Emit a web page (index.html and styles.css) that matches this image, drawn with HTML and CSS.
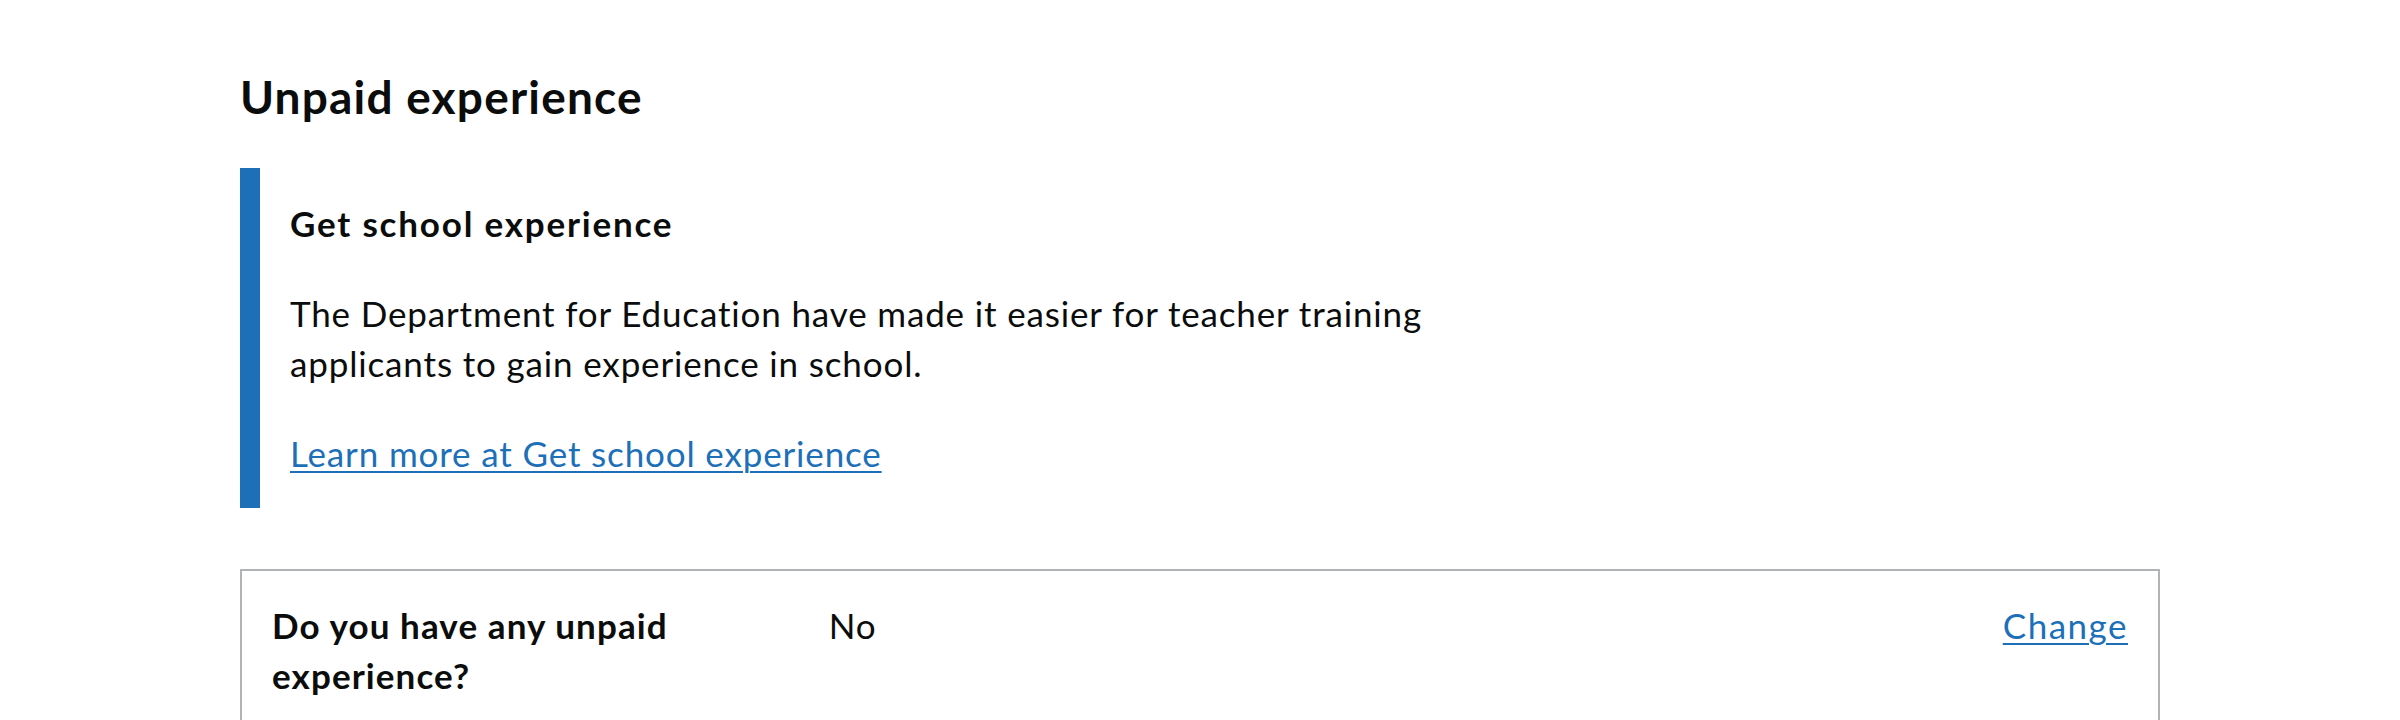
FILE: index.html
```html
<!DOCTYPE html>
<html lang="en">
<head>
<meta charset="utf-8">
<title>Unpaid experience</title>
<link rel="stylesheet" href="styles.css">
</head>
<body>
<main class="page">
  <h2 class="heading-m">Unpaid experience</h2>
  <div class="inset">
    <h3 class="heading-s">Get school experience</h3>
    <p class="body">The Department for Education have made it easier for teacher training applicants to gain experience in school.</p>
    <p class="body"><a class="link" href="#">Learn more at Get school experience</a></p>
  </div>
  <div class="card">
    <dl class="summary">
      <div class="row">
        <dt class="key">Do you have any unpaid experience?</dt>
        <dd class="value">No</dd>
        <dd class="actions"><a class="link" href="#">Change</a></dd>
      </div>
    </dl>
  </div>
</main>
</body>
</html>
```

FILE: styles.css
```css
html, body {
  margin: 0;
  padding: 0;
  background: #ffffff;
}

body {
  font-family: Lato, "Noto Sans", Arial, sans-serif;
  color: #0b0c0c;
}

.page {
  width: 1920px;
  padding: 67px 0 0 240px;
}

.heading-m {
  margin: 0 0 41px;
  font-size: 46px;
  line-height: 60px;
  font-weight: 700;
  letter-spacing: 1.2px;
}

.inset {
  max-width: 1280px;
  box-sizing: border-box;
  border-left: 20px solid #1d70b8;
  padding: 30px 30px 30px 30px;
  margin: 0 0 61px;
}

.heading-s {
  margin: 0 0 40px;
  font-size: 35px;
  line-height: 50px;
  font-weight: 700;
  letter-spacing: 1.8px;
}

.body {
  margin: 0 0 40px;
  font-size: 35px;
  line-height: 50px;
  letter-spacing: 0.85px;
}

.body:last-child {
  margin-bottom: 0;
}

.link {
  color: #1d70b8;
  text-decoration: underline;
  text-decoration-thickness: 2px;
  text-underline-offset: 4px;
}

.card {
  border: 2px solid #b1b4b6;
  padding: 29px 30px 30px;
}

.summary {
  margin: 0;
  font-size: 35px;
  line-height: 50px;
  letter-spacing: 0.85px;
}

.row {
  display: grid;
  grid-template-columns: 30% 1fr auto;
}

.key {
  font-weight: 700;
  letter-spacing: 1.1px;
  padding-right: 40px;
}

.value {
  margin: 0;
  padding-right: 40px;
}

.actions {
  margin: 0;
  text-align: right;
  letter-spacing: 1.5px;
}
```
